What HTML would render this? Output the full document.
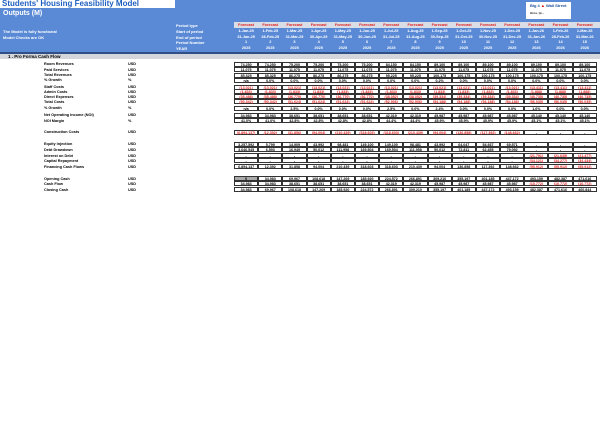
<!DOCTYPE html><html><head><style>
*{margin:0;padding:0;box-sizing:border-box}
body{width:600px;height:421px;background:#fff;position:relative;overflow:hidden;font-family:"Liberation Sans",sans-serif;font-weight:bold;font-size:4px;color:#000}
.hd{position:absolute;left:0;top:0;width:600px;height:52px;background:#5a8ad6}
.t{position:absolute;left:0;top:0;width:175px;height:8px;background:#fff;color:#1f5fbf;font-size:8px;line-height:8px;padding-left:2px}
.o{position:absolute;left:3px;top:10px;color:#fff;font-size:7px}
.w{position:absolute;color:#fff;font-size:4px;line-height:5px}
.band{position:absolute;left:234px;top:22px;width:366px;height:6px;background:#d9dde6}
.r{position:absolute;left:234px;display:flex;height:5.4px}
.r span{width:24.2px;text-align:center;line-height:5px;font-size:3.8px}
.hr span{color:#fff}
.fc span{color:#e02020}
.sec{position:absolute;left:0;top:52px;width:600px;height:2px;background:#2f4f86}
.sb{position:absolute;left:0;top:54px;width:600px;height:5px;background:#d3d6db;font-size:4.5px;line-height:5px;padding-left:8px}
.l{position:absolute;left:44px;font-size:3.8px}
.u{position:absolute;left:128px;font-size:3.8px}
.d{position:absolute;left:234px;display:flex}
.d span{width:24.2px;border:0.7px solid #333;text-align:center;font-size:3.6px;line-height:4.4px;height:5.4px}
.n span{color:#e02020}
.g span:first-child{background:#aaa}
.logo{position:absolute;left:526px;top:2px;width:45px;height:17px;background:#fff;color:#1f4f9f;font-size:4px;line-height:7px;padding-left:4px}
</style></head><body>
<div class="hd"></div>
<div class="t">Students' Housing Feasibility Model</div>
<div class="o">Outputs (M)</div>
<div class="logo">Big 4 <span style="color:#d00">&#9650;</span> Wall Street<br><span style="font-size:2.5px;color:#333">Weiss, Qo...</span></div>
<div class="band"></div>
<div class="w" style="left:176px;top:23px">Period type</div>
<div class="w" style="left:176px;top:29px">Start of period</div>
<div class="w" style="left:176px;top:35px">End of period</div>
<div class="w" style="left:176px;top:40px">Period Number</div>
<div class="w" style="left:176px;top:46px">YEAR</div>
<div class="w" style="left:3px;top:29px">The Model is fully functional</div>
<div class="w" style="left:3px;top:35px">Model Checks are OK</div>
<div class="r fc" style="top:22.5px"><span>Forecast</span><span>Forecast</span><span>Forecast</span><span>Forecast</span><span>Forecast</span><span>Forecast</span><span>Forecast</span><span>Forecast</span><span>Forecast</span><span>Forecast</span><span>Forecast</span><span>Forecast</span><span>Forecast</span><span>Forecast</span><span>Forecast</span></div>
<div class="r hr" style="top:28.5px"><span>1-Jan-25</span><span>1-Feb-25</span><span>1-Mar-25</span><span>1-Apr-25</span><span>1-May-25</span><span>1-Jun-25</span><span>1-Jul-25</span><span>1-Aug-25</span><span>1-Sep-25</span><span>1-Oct-25</span><span>1-Nov-25</span><span>1-Dec-25</span><span>1-Jan-26</span><span>1-Feb-26</span><span>1-Mar-26</span></div>
<div class="r hr" style="top:34.5px"><span>31-Jan-25</span><span>28-Feb-25</span><span>31-Mar-25</span><span>30-Apr-25</span><span>31-May-25</span><span>30-Jun-25</span><span>31-Jul-25</span><span>31-Aug-25</span><span>30-Sep-25</span><span>31-Oct-25</span><span>30-Nov-25</span><span>31-Dec-25</span><span>31-Jan-26</span><span>28-Feb-26</span><span>31-Mar-26</span></div>
<div class="r hr" style="top:40px"><span>1</span><span>2</span><span>3</span><span>4</span><span>5</span><span>6</span><span>7</span><span>8</span><span>9</span><span>10</span><span>11</span><span>12</span><span>13</span><span>14</span><span>15</span></div>
<div class="r hr" style="top:45.5px"><span>2025</span><span>2025</span><span>2025</span><span>2025</span><span>2025</span><span>2025</span><span>2025</span><span>2025</span><span>2025</span><span>2025</span><span>2025</span><span>2025</span><span>2026</span><span>2026</span><span>2026</span></div>
<div class="sec"></div>
<div class="sb">1 . Pro Forma Cash Flow</div>

<div class="l" style="top:62px">Room Revenues</div><div class="u" style="top:62px">USD</div>
<div class="l" style="top:68px">Paid Services</div><div class="u" style="top:68px">USD</div>
<div class="l" style="top:73px">Total Revenues</div><div class="u" style="top:73px">USD</div>
<div class="l" style="top:78px">% Growth</div><div class="u" style="top:78px">%</div>
<div class="l" style="top:85px">Staff Costs</div><div class="u" style="top:85px">USD</div>
<div class="l" style="top:89.5px">Admin Costs</div><div class="u" style="top:89.5px">USD</div>
<div class="l" style="top:94.5px">Direct Expenses</div><div class="u" style="top:94.5px">USD</div>
<div class="l" style="top:99.5px">Total Costs</div><div class="u" style="top:99.5px">USD</div>
<div class="l" style="top:106px">% Growth</div><div class="u" style="top:106px">%</div>
<div class="l" style="top:113px">Net Operating Income (NOI)</div><div class="u" style="top:113px">USD</div>
<div class="l" style="top:119px">NOI Margin</div><div class="u" style="top:119px">%</div>
<div class="l" style="top:130px">Construction Costs</div><div class="u" style="top:130px">USD</div>
<div class="l" style="top:142px">Equity Injection</div><div class="u" style="top:142px">USD</div>
<div class="l" style="top:148px">Debt Drawdown</div><div class="u" style="top:148px">USD</div>
<div class="l" style="top:153.5px">Interest on Debt</div><div class="u" style="top:153.5px">USD</div>
<div class="l" style="top:159px">Capital Repayment</div><div class="u" style="top:159px">USD</div>
<div class="l" style="top:165px">Financing Cash Flows</div><div class="u" style="top:165px">USD</div>
<div class="l" style="top:176.5px">Opening Cash</div><div class="u" style="top:176.5px">USD</div>
<div class="l" style="top:182px">Cash Flow</div><div class="u" style="top:182px">USD</div>
<div class="l" style="top:188px">Closing Cash</div><div class="u" style="top:188px">USD</div>

<div class="d" style="top:61.5px"><span>74,250</span><span>74,250</span><span>75,200</span><span>75,200</span><span>75,200</span><span>75,200</span><span>84,150</span><span>84,150</span><span>89,100</span><span>89,100</span><span>89,100</span><span>89,100</span><span>89,100</span><span>89,100</span><span>89,100</span></div>
<div class="d" style="top:67px"><span>11,075</span><span>11,075</span><span>11,075</span><span>11,075</span><span>11,075</span><span>11,075</span><span>11,075</span><span>11,075</span><span>11,075</span><span>11,075</span><span>11,075</span><span>11,075</span><span>11,075</span><span>11,075</span><span>11,075</span></div>
<div class="d" style="top:72.5px"><span>85,325</span><span>85,325</span><span>86,275</span><span>86,275</span><span>86,275</span><span>86,275</span><span>95,225</span><span>95,225</span><span>100,175</span><span>100,175</span><span>100,175</span><span>100,175</span><span>100,175</span><span>100,175</span><span>100,175</span></div>
<div class="d" style="top:77.5px"><span>n/a</span><span>0.0%</span><span>0.0%</span><span>0.0%</span><span>0.0%</span><span>0.0%</span><span>0.0%</span><span>0.0%</span><span>0.2%</span><span>0.0%</span><span>0.0%</span><span>0.0%</span><span>0.0%</span><span>0.0%</span><span>0.0%</span></div>
<div class="d n" style="top:84.5px"><span>(13,021)</span><span>(13,021)</span><span>(13,021)</span><span>(13,021)</span><span>(13,021)</span><span>(13,021)</span><span>(13,021)</span><span>(13,021)</span><span>(13,021)</span><span>(13,021)</span><span>(13,021)</span><span>(13,021)</span><span>(13,411)</span><span>(13,411)</span><span>(13,411)</span></div>
<div class="d n" style="top:89px"><span>(1,833)</span><span>(1,833)</span><span>(1,833)</span><span>(1,833)</span><span>(1,833)</span><span>(1,833)</span><span>(1,833)</span><span>(1,833)</span><span>(1,833)</span><span>(1,833)</span><span>(1,833)</span><span>(1,833)</span><span>(1,888)</span><span>(1,888)</span><span>(1,888)</span></div>
<div class="d n" style="top:94px"><span>(35,488)</span><span>(35,488)</span><span>(36,770)</span><span>(36,770)</span><span>(36,770)</span><span>(36,770)</span><span>(38,052)</span><span>(38,052)</span><span>(39,334)</span><span>(39,334)</span><span>(39,334)</span><span>(39,334)</span><span>(40,735)</span><span>(40,735)</span><span>(40,735)</span></div>
<div class="d n" style="top:99px"><span>(50,342)</span><span>(50,342)</span><span>(51,624)</span><span>(51,624)</span><span>(51,624)</span><span>(51,624)</span><span>(52,906)</span><span>(52,906)</span><span>(54,188)</span><span>(54,188)</span><span>(54,188)</span><span>(54,188)</span><span>(56,035)</span><span>(56,035)</span><span>(56,035)</span></div>
<div class="d" style="top:105.5px"><span>n/a</span><span>0.0%</span><span>2.5%</span><span>0.0%</span><span>0.0%</span><span>0.0%</span><span>2.5%</span><span>0.0%</span><span>2.4%</span><span>0.0%</span><span>0.0%</span><span>0.0%</span><span>1.6%</span><span>0.0%</span><span>0.0%</span></div>
<div class="d" style="top:112.5px"><span>34,983</span><span>34,983</span><span>38,651</span><span>38,651</span><span>38,651</span><span>38,651</span><span>42,319</span><span>42,319</span><span>45,987</span><span>45,987</span><span>45,987</span><span>45,987</span><span>45,140</span><span>45,140</span><span>45,140</span></div>
<div class="d" style="top:118px"><span>41.0%</span><span>41.0%</span><span>42.8%</span><span>42.8%</span><span>42.8%</span><span>42.8%</span><span>44.4%</span><span>44.4%</span><span>45.9%</span><span>45.9%</span><span>45.9%</span><span>45.9%</span><span>45.1%</span><span>45.1%</span><span>45.1%</span></div>
<div class="d n" style="top:129.5px"><span>(6,894,137)</span><span>(12,392)</span><span>(31,856)</span><span>(94,004)</span><span>(210,439)</span><span>(318,603)</span><span>(318,603)</span><span>(210,439)</span><span>(94,004)</span><span>(136,858)</span><span>(117,392)</span><span>(148,662)</span><span style="color:#000">-</span><span style="color:#000">-</span><span style="color:#000">-</span></div>
<div class="d" style="top:141.5px"><span>3,257,592</span><span>5,799</span><span>14,909</span><span>43,992</span><span>98,481</span><span>149,100</span><span>149,100</span><span>98,481</span><span>43,992</span><span>64,047</span><span>54,937</span><span>69,571</span><span>-</span><span>-</span><span>-</span></div>
<div class="d" style="top:147px"><span>3,646,545</span><span>6,593</span><span>16,949</span><span>50,012</span><span>111,958</span><span>169,504</span><span>169,504</span><span>111,958</span><span>50,012</span><span>72,811</span><span>62,455</span><span>79,092</span><span>-</span><span>-</span><span>-</span></div>
<div class="d" style="top:152.5px"><span>-</span><span>-</span><span>-</span><span>-</span><span>-</span><span>-</span><span>-</span><span>-</span><span>-</span><span>-</span><span>-</span><span>-</span><span style="color:#e02020">(21,791)</span><span style="color:#e02020">(21,635)</span><span style="color:#e02020">(21,477)</span></div>
<div class="d" style="top:158px"><span>-</span><span>-</span><span>-</span><span>-</span><span>-</span><span>-</span><span>-</span><span>-</span><span>-</span><span>-</span><span>-</span><span>-</span><span style="color:#e02020">(34,121)</span><span style="color:#e02020">(34,277)</span><span style="color:#e02020">(34,434)</span></div>
<div class="d" style="top:163.5px"><span>6,894,137</span><span>12,392</span><span>31,858</span><span>94,004</span><span>210,439</span><span>318,603</span><span>318,603</span><span>210,439</span><span>94,004</span><span>136,858</span><span>117,392</span><span>148,662</span><span style="color:#e02020">(55,912)</span><span style="color:#e02020">(55,912)</span><span style="color:#e02020">(55,912)</span></div>
<div class="d g" style="top:175.5px"><span>0</span><span>34,983</span><span>69,967</span><span>108,618</span><span>147,269</span><span>185,920</span><span>224,572</span><span>266,891</span><span>309,210</span><span>355,197</span><span>401,185</span><span>447,172</span><span>493,159</span><span>482,387</span><span>471,616</span></div>
<div class="d" style="top:181px"><span>34,983</span><span>34,983</span><span>38,651</span><span>38,651</span><span>38,651</span><span>38,651</span><span>42,319</span><span>42,319</span><span>45,987</span><span>45,987</span><span>45,987</span><span>45,987</span><span style="color:#e02020">(10,772)</span><span style="color:#e02020">(10,772)</span><span style="color:#e02020">(10,772)</span></div>
<div class="d" style="top:186.5px"><span>34,983</span><span>69,967</span><span>108,618</span><span>147,269</span><span>185,920</span><span>224,572</span><span>266,891</span><span>309,210</span><span>355,197</span><span>401,185</span><span>447,172</span><span>493,159</span><span>482,387</span><span>471,616</span><span>460,844</span></div>
</body></html>
